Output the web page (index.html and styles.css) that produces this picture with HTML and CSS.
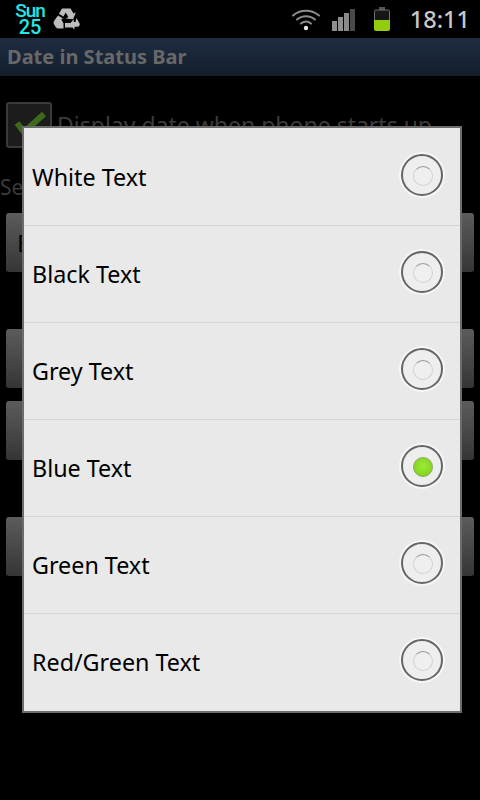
FILE: index.html
```html
<!DOCTYPE html>
<html lang="en">
<head>
<meta charset="utf-8">
<title>Date in Status Bar</title>
<link rel="stylesheet" href="styles.css">
</head>
<body>
<div class="screen">
  <header class="status">
    <div class="date"><span class="day">Sun</span><span class="num">25</span></div>
    <svg class="recycle" width="28" height="26" viewBox="0 0 28 26">
      <g fill="#bdbdbd">
        <path d="M9 2.500h8.500l3 5 2.400-1.300-2.800 7-7.200-.8 2.400-1.400-2.600-4.400-2.300 3.800-4.500-2.600z"/>
        <path d="M5.500 10.500l5 3-1.800 .9 2.300 3.900v5.200H6c-2 0-3-1.500-4.500-4.300-.6-1.100-.5-2.200 .2-3.300l1.200-2z" transform="translate(-.5 -1)"/>
        <path d="M23.500 12.500l3 5.200c.8 1.500-.2 3.500-2 3.500h-3v2.800l-5.300-5 4.500-5.300v2.700h1.800z" transform="translate(0 -.5)"/>
        <path d="M12 17.500h7v4.500h-7z" transform="translate(0 -.5)"/>
      </g>
    </svg>
    <div class="spacer"></div>
    <svg class="wifi" width="30" height="26" viewBox="0 0 30 26">
      <g fill="none" stroke="#8c8c8c" stroke-width="2" stroke-linecap="round">
        <path d="M2 9.500C9 3 21 3 28 9.500"/>
        <path d="M6 13.500C11 9 19 9 24 13.500"/>
        <path d="M10 17.500C13 15 17 15 20 17.500"/>
      </g>
      <circle cx="15" cy="22" r="2.200" fill="#e6e6e6"/>
    </svg>
    <svg class="signal" width="24" height="22" viewBox="0 0 24 22">
      <rect x="0" y="12" width="5" height="10" fill="#8f8f8f"/>
      <rect x="6" y="8" width="5" height="14" fill="#8f8f8f"/>
      <rect x="12" y="4" width="5" height="18" fill="#8a8a8a"/>
      <rect x="18" y="0" width="5" height="22" fill="#4a4a4a"/>
    </svg>
    <svg class="battery" width="18" height="24" viewBox="0 0 18 24">
      <rect x="6" y="0" width="6" height="3" fill="#555"/>
      <rect x="1.500" y="3" width="15" height="19" rx="1.500" fill="#161616" stroke="#6e6e6e"/>
      <path d="M1 13h16v9a2 2 0 0 1-2 2H3a2 2 0 0 1-2-2z" fill="#93cc0a"/>
    </svg>
    <span class="time">18:11</span>
  </header>
  <div class="titlebar">Date in Status Bar</div>
  <main class="prefs">
    <div class="check-row">
      <span class="checkbox">
        <svg width="46" height="46" viewBox="0 0 46 46"><path d="M11 21l7 9L38 12" fill="none" stroke="#3f6a1c" stroke-width="6"/></svg>
      </span>
      <span class="check-label">Display date when phone starts up</span>
    </div>
    <div class="section">Select text colour</div>
    <button class="pref-btn first">Blue Text</button>
    <button class="pref-btn second"></button>
    <button class="pref-btn third"></button>
    <button class="pref-btn fourth"></button>
  </main>
  <section class="dialog">
    <div class="option"><span>White Text</span><i class="radio"></i></div>
    <div class="option"><span>Black Text</span><i class="radio"></i></div>
    <div class="option"><span>Grey Text</span><i class="radio"></i></div>
    <div class="option"><span>Blue Text</span><i class="radio on"></i></div>
    <div class="option"><span>Green Text</span><i class="radio"></i></div>
    <div class="option"><span>Red/Green Text</span><i class="radio"></i></div>
  </section>
</div>
</body>
</html>
```
FILE: styles.css
```css
* { box-sizing: border-box; }
html, body { margin: 0; padding: 0; background: #000; }
.screen {
  position: relative;
  width: 480px;
  height: 800px;
  overflow: hidden;
  background: #000;
  font-family: "Noto Sans", "Open Sans", sans-serif;
}
.status {
  height: 38px;
  display: flex;
  align-items: center;
  padding: 0 10px 0 16px;
  background: #000;
}
.date {
  width: 28px;
  display: flex;
  flex-direction: column;
  align-items: center;
  font-family: Roboto, sans-serif;
  font-weight: 500;
  color: #1ee8e8;
  line-height: 17px;
  font-size: 19px;
}
.day { letter-spacing: -1px; }
.num { font-size: 20px; }
.recycle { margin-left: 9px; }
.spacer { flex: 1; }
.wifi { margin-right: 11px; margin-top: -1px; }
.signal { margin-right: 17px; margin-top: 1px; }
.battery { margin-right: 19px; margin-top: 0; }
.time { color: #c8c8c8; font-size: 23.500px; font-weight: 500; line-height: 38px; }
.titlebar {
  height: 38px;
  padding-left: 7px;
  background: linear-gradient(#1e2d42, #141e2c);
  color: #686868;
  font-weight: 700;
  font-size: 20px;
  line-height: 37px;
}
.prefs { padding: 26px 6px 0; }
.check-row { display: flex; align-items: center; height: 46px; }
.checkbox {
  width: 46px;
  height: 46px;
  border: 2px solid #3a3a3a;
  border-radius: 3px;
  background: #1c1c1c;
  overflow: hidden;
  flex: none;
}
.checkbox svg { display: block; margin: -2px; }
.check-label { margin-left: 5px; color: #3c3c3c; font-size: 23px; white-space: nowrap; line-height: 46px; }
.section { margin-top: 26px; margin-left: -6px; color: #3a3a3a; font-size: 21px; line-height: 26px; height: 39px; }
.pref-btn {
  display: block;
  width: 468px;
  height: 59px;
  border: 0;
  border-radius: 3px;
  padding: 0 0 0 11px;
  background: linear-gradient(#5c5c5c, #353535);
  color: #000;
  font: 24px "Noto Sans", sans-serif;
  text-align: left;
}
.second { margin-top: 57px; }
.third { margin-top: 13px; }
.fourth { margin-top: 57px; }
.dialog {
  position: absolute;
  left: 22px;
  top: 126px;
  width: 440px;
  height: 587px;
  padding-top: 1px;
  border: 2px solid #6c6c6c;
  background: #e9e9e9;
}
.option {
  height: 97px;
  display: flex;
  align-items: center;
  justify-content: space-between;
  padding: 0 17px 0 8px;
  border-bottom: 1px solid #d6d6d6;
  color: #000;
  font-size: 23.300px;
}
.option:last-child { border-bottom: 0; height: 95px; }
.radio {
  position: relative;
  top: -2px;
  display: block;
  width: 42px;
  height: 42px;
  border: 2px solid #666;
  border-radius: 50%;
  background: #eeeeee;
  box-shadow: 0 0 0 2px #f6f6f6;
}
.radio::after {
  content: "";
  position: absolute;
  left: 10px;
  top: 10px;
  width: 18px;
  height: 18px;
  border-radius: 50%;
  background: #efefef;
  border: 1px solid #d2d2d2;
  border-top-color: #9a9a9a;
}
.radio.on::after {
  background: radial-gradient(circle at 50% 45%, #9fe83a, #78cf12);
  border: 1px solid #8aa86a;
}
```
